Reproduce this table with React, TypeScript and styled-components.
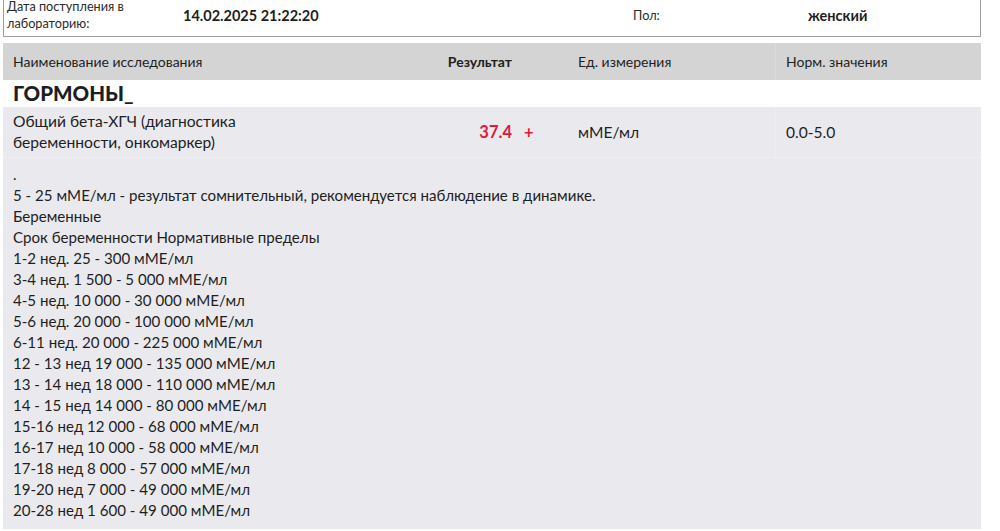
import React from "react";
import styled, { createGlobalStyle } from "styled-components";

const GlobalStyle = createGlobalStyle`
  html, body {
    margin: 0;
    padding: 0;
    background: #fff;
    overflow: hidden;
  }
  body {
    font-family: Lato, "Noto Sans", sans-serif;
    color: #1e1e1e;
  }
`;

const Page = styled.div`
  width: 978px;
  padding-left: 3px;
`;

const InfoBox = styled.div`
  display: grid;
  grid-template-columns: 176px 450px 175px 1fr;
  align-items: center;
  height: 43px;
  margin-top: -6px;
  box-sizing: border-box;
  border: 1px solid #9c9c9c;
  border-top: none;
`;

const InfoLabel = styled.div`
  padding-left: 3px;
  font-size: 12.7px;
  line-height: 17px;
  color: #2a2a2a;
`;

const InfoValue = styled.div`
  padding-left: 3px;
  font-size: 14.5px;
  font-weight: 700;
`;

const Grid = styled.div`
  display: grid;
  grid-template-columns: 250px 262px 53px 207px 1fr;
  align-items: center;
`;

const HeaderRow = styled(Grid)`
  margin-top: 6px;
  height: 37px;
  background: #d4d4d4;
  font-size: 14px;
`;

const Cell = styled.div<{ $align?: "left" | "right"; $bold?: boolean; $divider?: boolean }>`
  padding: 0 ${(p) => (p.$align === "right" ? "3px" : "10px")};
  text-align: ${(p) => p.$align ?? "left"};
  font-weight: ${(p) => (p.$bold ? 700 : 400)};
  align-self: stretch;
  display: flex;
  align-items: center;
  justify-content: ${(p) => (p.$align === "right" ? "flex-end" : "flex-start")};
  border-left: ${(p) => (p.$divider ? "1px solid rgba(255,255,255,0.18)" : "none")};
`;

const FlagCell = styled(Cell)`
  padding-left: 9px;
`;

const GroupTitle = styled.div`
  height: 27px;
  padding-left: 10px;
  font-size: 20.5px;
  font-weight: 900;
  line-height: 27px;
`;

const DataRow = styled(Grid)`
  height: 51px;
  background: #eaeaee;
  font-size: 15.6px;
  line-height: 21px;
  border-bottom: 1px solid #efeff2;
  box-sizing: border-box;
`;

const Result = styled.span`
  color: #e3183a;
  font-weight: 700;
  font-size: 16.5px;
`;

const Comment = styled.div`
  background: #eaeaee;
  padding: 6px 10px 8px;
  font-size: 15.1px;
  line-height: 21px;
`;

const Line = styled.div``;

const commentLines = [
  ".",
  "5 - 25 мМЕ/мл - результат сомнительный, рекомендуется наблюдение в динамике.",
  "Беременные",
  "Срок беременности Нормативные пределы",
  "1-2 нед. 25 - 300 мМЕ/мл",
  "3-4 нед. 1 500 - 5 000 мМЕ/мл",
  "4-5 нед. 10 000 - 30 000 мМЕ/мл",
  "5-6 нед. 20 000 - 100 000 мМЕ/мл",
  "6-11 нед. 20 000 - 225 000 мМЕ/мл",
  "12 - 13 нед 19 000 - 135 000 мМЕ/мл",
  "13 - 14 нед 18 000 - 110 000 мМЕ/мл",
  "14 - 15 нед 14 000 - 80 000 мМЕ/мл",
  "15-16 нед 12 000 - 68 000 мМЕ/мл",
  "16-17 нед 10 000 - 58 000 мМЕ/мл",
  "17-18 нед 8 000 - 57 000 мМЕ/мл",
  "19-20 нед 7 000 - 49 000 мМЕ/мл",
  "20-28 нед 1 600 - 49 000 мМЕ/мл",
];

const App: React.FC = () => {
  return (
    <>
      <GlobalStyle />
      <Page>
        <InfoBox>
          <InfoLabel>
            Дата поступления в
            <br />
            лабораторию:
          </InfoLabel>
          <InfoValue>14.02.2025 21:22:20</InfoValue>
          <InfoLabel>Пол:</InfoLabel>
          <InfoValue>женский</InfoValue>
        </InfoBox>

        <HeaderRow>
          <Cell>Наименование исследования</Cell>
          <Cell $align="right" $bold>
            Результат
          </Cell>
          <Cell />
          <Cell>Ед. измерения</Cell>
          <Cell $divider>Норм. значения</Cell>
        </HeaderRow>

        <GroupTitle>ГОРМОНЫ_</GroupTitle>

        <DataRow>
          <Cell>Общий бета-ХГЧ (диагностика беременности, онкомаркер)</Cell>
          <Cell $align="right">
            <Result>37.4</Result>
          </Cell>
          <FlagCell>
            <Result>+</Result>
          </FlagCell>
          <Cell>мМЕ/мл</Cell>
          <Cell $divider>0.0-5.0</Cell>
        </DataRow>

        <Comment>
          {commentLines.map((line, i) => (
            <Line key={i}>{line}</Line>
          ))}
        </Comment>
      </Page>
    </>
  );
};

export default App;
